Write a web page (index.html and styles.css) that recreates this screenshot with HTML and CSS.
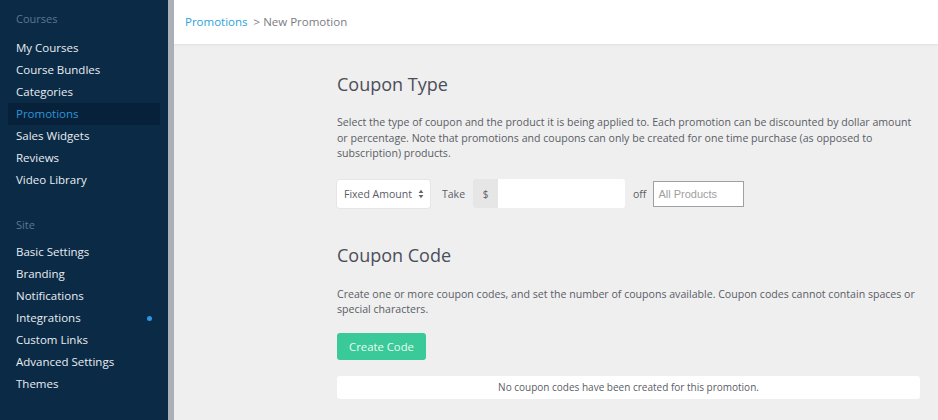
FILE: index.html
```html
<!DOCTYPE html>
<html>
<head>
<meta charset="utf-8">
<link rel="stylesheet" href="styles.css">
</head>
<body>
<div class="app">
  <nav class="sidebar">
    <div class="group-label">Courses</div>
    <ul class="nav">
      <li>My Courses</li>
      <li>Course Bundles</li>
      <li>Categories</li>
      <li class="active">Promotions</li>
      <li>Sales Widgets</li>
      <li>Reviews</li>
      <li>Video Library</li>
    </ul>
    <div class="group-label site">Site</div>
    <ul class="nav">
      <li>Basic Settings</li>
      <li>Branding</li>
      <li>Notifications</li>
      <li class="has-dot">Integrations<span class="dot"></span></li>
      <li>Custom Links</li>
      <li>Advanced Settings</li>
      <li>Themes</li>
    </ul>
  </nav>
  <main class="main">
    <header class="topbar">
      <a class="crumb-link">Promotions</a><span class="crumb-sep">&gt; New Promotion</span>
    </header>
    <div class="content">
      <h2 class="title">Coupon Type</h2>
      <p class="desc">Select the type of coupon and the product it is being applied to. Each promotion can be discounted by dollar amount or percentage. Note that promotions and coupons can only be created for one time purchase (as opposed to subscription) products.</p>
      <div class="form-row">
        <div class="select">Fixed Amount
          <svg class="arrows" width="6" height="10" viewBox="0 0 6 10"><path d="M3 0.8 L5.4 4 H0.6 Z M3 9.2 L5.4 6 H0.6 Z" fill="#666"/></svg>
        </div>
        <span class="label take">Take</span>
        <div class="input-group">
          <span class="addon">$</span>
          <span class="field"></span>
        </div>
        <span class="label off">off</span>
        <div class="products">All Products</div>
      </div>
      <h2 class="title second">Coupon Code</h2>
      <p class="desc code-desc">Create one or more coupon codes, and set the number of coupons available. Coupon codes cannot contain spaces or special characters.</p>
      <button class="btn">Create Code</button>
      <div class="empty">No coupon codes have been created for this promotion.</div>
    </div>
  </main>
</div>
</body>
</html>
```

FILE: styles.css
```css
* { box-sizing: border-box; }
html, body { margin: 0; padding: 0; }
body {
  font-family: "Open Sans", "DejaVu Sans", sans-serif;
  width: 938px;
  height: 420px;
  overflow: hidden;
  background: #efefef;
}
.app { display: flex; height: 420px; }
.sidebar {
  width: 174px;
  flex: none;
  background: #0b2a45;
  border-right: 6px solid #abb0b6;
  padding: 10px 8px 0 8px;
}
.group-label {
  font-size: 11px;
  color: #5b7790;
  padding-left: 8px;
  line-height: 18px;
  margin-bottom: 9px;
}
.group-label.site { margin-top: 25px; margin-bottom: 7px; }
.nav { list-style: none; margin: 0; padding: 0; }
.nav li {
  font-size: 11.5px;
  color: #e8edf2;
  line-height: 22px;
  height: 22px;
  padding-left: 8px;
  position: relative;
}
.nav li.active { background: #07213a; color: #2c96d8; }
.dot {
  position: absolute;
  right: 8px;
  top: 9px;
  width: 5px;
  height: 5px;
  border-radius: 50%;
  background: #2d95e6;
}
.main { flex: 1; display: flex; flex-direction: column; }
.topbar {
  height: 45px;
  background: #fff;
  border-bottom: 1px solid #e4e4e4;
  box-shadow: 0 1px 2px rgba(0,0,0,0.03);
  padding: 13px 0 0 11px;
  font-size: 11.5px;
  line-height: 18px;
}
.crumb-link { color: #2aa3dc; }
.crumb-sep { color: #7a7d83; margin-left: 6px; }
.content {
  padding: 26px 0 0 163px;
  width: 746px;
}
.title {
  margin: 0;
  font-weight: 400;
  font-size: 18px;
  line-height: 26px;
  color: #4a4e59;
}
.title.second { margin-top: 34px; }
.desc {
  margin: 18px 0 0 0;
  font-size: 10.6px;
  line-height: 15.5px;
  color: #5a5d66;
}
.desc.code-desc { margin-top: 19px; }
.form-row {
  display: flex;
  align-items: center;
  margin-top: 18px;
  height: 28px;
}
.select {
  width: 93px;
  height: 28px;
  background: #fff;
  border-radius: 3px;
  font-size: 10.5px;
  color: #5a5d66;
  padding-left: 7px;
  display: flex;
  align-items: center;
  justify-content: space-between;
  padding-right: 6px;
  box-shadow: 0 0 0 1px #e6e6e6;
}
.label { font-size: 10.5px; color: #5a5d66; }
.take { margin: 0 8px 0 12px; }
.off { margin: 0 7px 0 8px; }
.input-group { display: flex; height: 29px; }
.addon {
  width: 25px;
  background: #e6e6e6;
  font-size: 10px;
  color: #5a5d66;
  display: flex;
  align-items: center;
  justify-content: center;
  border-radius: 3px 0 0 3px;
}
.field { width: 127px; background: #fff; border-radius: 0 3px 3px 0; }
.products {
  width: 91px;
  height: 26px;
  background: #fff;
  border: 1px solid #9ea0a4;
  font-family: "Liberation Sans", Arial, sans-serif;
  font-size: 11px;
  color: #a0a0a0;
  padding-left: 4px;
  display: flex;
  align-items: center;
}
.btn {
  display: block;
  margin-top: 15px;
  width: 89px;
  height: 27px;
  border: 0;
  border-radius: 3px;
  background: #3ac998;
  color: #eafbf4;
  font-family: "Open Sans", sans-serif;
  font-size: 11.3px;
  padding: 0;
}
.empty {
  margin-top: 16px;
  width: 583px;
  height: 23px;
  background: #fff;
  border-radius: 3px;
  font-size: 10px;
  line-height: 23px;
  text-align: center;
  color: #5a5d66;
}
```
